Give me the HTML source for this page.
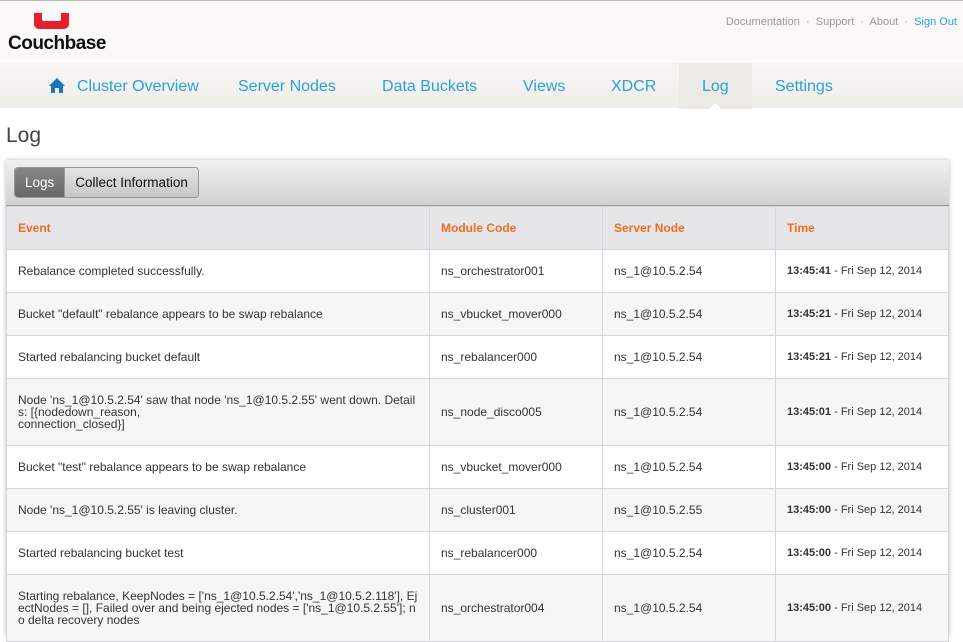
<!DOCTYPE html>
<html><head><style>
*{margin:0;padding:0;box-sizing:border-box}
body{width:963px;height:636px;overflow:hidden;background:#fff;font-family:"Liberation Sans",Arial,sans-serif;position:relative}
.top{position:absolute;left:0;top:0;width:963px;height:61px;background:#faf9f7;border-top:1px solid #bbb}
.nav{position:absolute;left:0;top:61px;width:963px;height:47px;background:linear-gradient(#f7f6f3,#efeee9);border-top:1px solid #fff}
.nav a{position:absolute;top:16px;font-size:16px;color:#2aa1dc;text-decoration:none}
.links{position:absolute;right:6px;top:15px;font-size:11px;color:#999}
.links span.s{color:#2aa1dc}
h1{position:absolute;left:6px;top:124px;font-size:21px;font-weight:normal;color:#444}
.panel{position:absolute;left:6px;top:160px;width:943px;height:476px;box-shadow:0 0 4px rgba(0,0,0,.3)}
.bar{height:46px;background:linear-gradient(#f0f0f0,#d2d2d2);border-bottom:1px solid #9a9a9a;position:relative}
.btns{position:absolute;left:8px;top:7px;height:31px;border:1px solid #999;border-radius:4px;overflow:hidden;display:flex;font-size:13.5px}
.btns div{padding:0 10px;line-height:29px}
.b1{background:linear-gradient(#888,#666);color:#fff}
.b2{background:linear-gradient(#e4e4e4,#c6c6c6);color:#111;border-left:1px solid #999}
table{border-collapse:collapse;width:943px;font-size:12px;color:#333}
td{border:1px solid #d6d6da;padding:0 11px;vertical-align:middle;line-height:12px}
th{border:1px solid #d6d6da;text-align:left;padding:0 11px;color:#f26b22;font-size:12px;background:#e6e6e8;height:43px}
tr:nth-child(odd) td{background:#f6f6f7}
b{color:#333;font-size:11px}
.t{font-size:11px}
</style></head><body>
<div class="top">
<div style="position:absolute;left:34px;top:12px;width:35px;height:16px;background:#e5202e;border-radius:0 0 5px 5px"></div>
<div style="position:absolute;left:42px;top:12px;width:19px;height:8px;background:#faf9f7;border-radius:0 0 2px 2px"></div>
<div style="position:absolute;left:8px;top:32px;font-size:19px;font-weight:bold;color:#111;letter-spacing:-0.5px">Couchbase</div>
<div class="links">Documentation &nbsp;·&nbsp; Support &nbsp;·&nbsp; About &nbsp;·&nbsp; <span class="s">Sign Out</span></div>
</div>
<div class="nav">
<svg style="position:absolute;left:49px;top:16px" width="16" height="15" viewBox="0 0 16 15"><path d="M8 0L0 8h2v7h4v-5h4v5h4V8h2z" fill="#1976b9"/></svg>
<a style="left:77px">Cluster Overview</a>
<a style="left:238px">Server Nodes</a>
<a style="left:382px">Data Buckets</a>
<a style="left:523px">Views</a>
<a style="left:611px">XDCR</a>
<div style="position:absolute;left:679px;top:1px;width:73px;height:46px;background:#ebeae4"></div>
<div style="position:absolute;left:709px;top:41px;width:0;height:0;border:6px solid transparent;border-bottom-color:#fff;border-top:0"></div>
<a style="left:702px">Log</a>
<a style="left:775px">Settings</a>
</div>
<h1>Log</h1>
<div class="panel">
<div class="bar"><div class="btns"><div class="b1">Logs</div><div class="b2">Collect Information</div></div></div>
<table>
<tr><th style="width:423px">Event</th><th style="width:173px">Module Code</th><th style="width:173px">Server Node</th><th>Time</th></tr>
<tr style="height:43px"><td>Rebalance completed successfully.</td><td>ns_orchestrator001</td><td>ns_1@10.5.2.54</td><td class="t"><b>13:45:41</b> - Fri Sep 12, 2014</td></tr>
<tr style="height:43px"><td>Bucket "default" rebalance appears to be swap rebalance</td><td>ns_vbucket_mover000</td><td>ns_1@10.5.2.54</td><td class="t"><b>13:45:21</b> - Fri Sep 12, 2014</td></tr>
<tr style="height:43px"><td>Started rebalancing bucket default</td><td>ns_rebalancer000</td><td>ns_1@10.5.2.54</td><td class="t"><b>13:45:21</b> - Fri Sep 12, 2014</td></tr>
<tr style="height:67px"><td>Node 'ns_1@10.5.2.54' saw that node 'ns_1@10.5.2.55' went down. Detail<br>s: [{nodedown_reason,<br>connection_closed}]</td><td>ns_node_disco005</td><td>ns_1@10.5.2.54</td><td class="t"><b>13:45:01</b> - Fri Sep 12, 2014</td></tr>
<tr style="height:43px"><td>Bucket "test" rebalance appears to be swap rebalance</td><td>ns_vbucket_mover000</td><td>ns_1@10.5.2.54</td><td class="t"><b>13:45:00</b> - Fri Sep 12, 2014</td></tr>
<tr style="height:43px"><td>Node 'ns_1@10.5.2.55' is leaving cluster.</td><td>ns_cluster001</td><td>ns_1@10.5.2.55</td><td class="t"><b>13:45:00</b> - Fri Sep 12, 2014</td></tr>
<tr style="height:43px"><td>Started rebalancing bucket test</td><td>ns_rebalancer000</td><td>ns_1@10.5.2.54</td><td class="t"><b>13:45:00</b> - Fri Sep 12, 2014</td></tr>
<tr style="height:67px"><td>Starting rebalance, KeepNodes = ['ns_1@10.5.2.54','ns_1@10.5.2.118'], Ej<br>ectNodes = [], Failed over and being ejected nodes = ['ns_1@10.5.2.55']; n<br>o delta recovery nodes</td><td>ns_orchestrator004</td><td>ns_1@10.5.2.54</td><td class="t"><b>13:45:00</b> - Fri Sep 12, 2014</td></tr>
</table>
</div>
</body></html>
